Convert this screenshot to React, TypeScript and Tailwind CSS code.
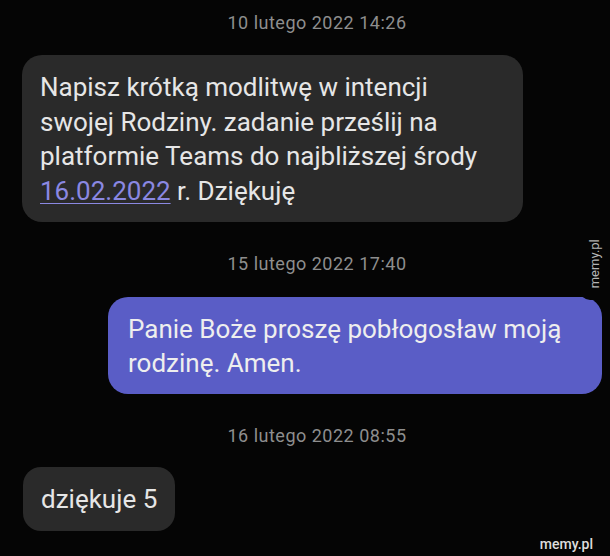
export default function App() {
  const stamp =
    "pl-[24px] text-center text-[18px] leading-[22px] text-[#8e8e8e] tracking-[0.5px]";

  return (
    <div
      className="relative w-[610px] h-[556px] overflow-hidden bg-[#050505]"
      style={{ fontFamily: "Roboto, 'Noto Sans', sans-serif" }}
    >
      <div className="flex flex-col pt-[12px]">
        <div className={stamp}>10 lutego 2022 14:26</div>

        <div className="mt-[21px] ml-[22px] w-[501px] rounded-[20px] bg-[#2a2a2a] pl-[18px] pr-[10px] pt-[15px] pb-[14px] text-[26px] leading-[34.5px] text-[#e6e6e6]">
          <div>Napisz krótką modlitwę w intencji</div>
          <div>swojej Rodziny. zadanie prześlij na</div>
          <div>platformie Teams do najbliższej środy</div>
          <div>
            <span className="text-[#8a88e2] underline decoration-1 underline-offset-[3px]">
              16.02.2022
            </span>{" "}
            r. Dziękuję
          </div>
        </div>

        <div className={`${stamp} mt-[31px]`}>15 lutego 2022 17:40</div>

        <div className="mt-[22px] ml-[108px] w-[494px] rounded-[20px] bg-[#5a5dc6] pl-[20px] pr-[10px] pt-[15px] pb-[14px] text-[26px] leading-[34px] text-[#eeeeee]">
          <div>Panie Boże proszę pobłogosław moją</div>
          <div>rodzinę. Amen.</div>
        </div>

        <div className={`${stamp} mt-[31px]`}>16 lutego 2022 08:55</div>

        <div className="mt-[20px] ml-[23px] self-start rounded-[18px] bg-[#2a2a2a] px-[18px] pt-[15px] pb-[15px] text-[26px] leading-[34px] text-[#e6e6e6]">
          dziękuje 5
        </div>
      </div>

      {/* watermark tab on the right */}
      <div className="absolute right-0 top-[228px] flex h-[72px] w-[30px] items-center justify-center rounded-bl-[10px] bg-[#050505]">
        <span className="-rotate-90 whitespace-nowrap text-[13px] text-[#b5b5b5]">
          memy.pl
        </span>
      </div>

      <div className="absolute right-[17px] top-[536px] text-[14px] leading-[16px] font-medium text-[#dddddd]">
        memy.pl
      </div>
    </div>
  );
}
